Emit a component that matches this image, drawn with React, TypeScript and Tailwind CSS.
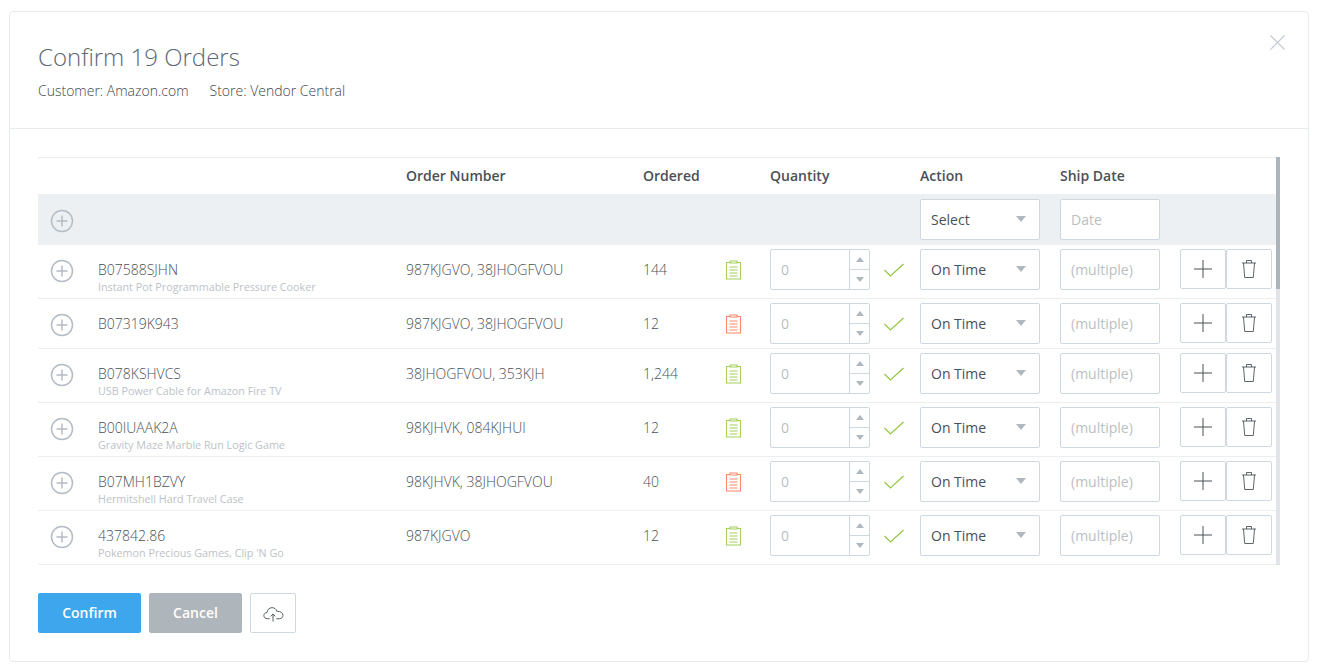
const orders = [
  { sku: "B07588SJHN", name: "Instant Pot Programmable Pressure Cooker", numbers: "987KJGVO, 38JHOGFVOU", ordered: "144", ok: true },
  { sku: "B07319K943", name: "", numbers: "987KJGVO, 38JHOGFVOU", ordered: "12", ok: false },
  { sku: "B078KSHVCS", name: "USB Power Cable for Amazon Fire TV", numbers: "38JHOGFVOU, 353KJH", ordered: "1,244", ok: true },
  { sku: "B00IUAAK2A", name: "Gravity Maze Marble Run Logic Game", numbers: "98KJHVK, 084KJHUI", ordered: "12", ok: true },
  { sku: "B07MH1BZVY", name: "Hermitshell Hard Travel Case", numbers: "98KJHVK, 38JHOGFVOU", ordered: "40", ok: false },
  { sku: "437842.86", name: "Pokemon Precious Games, Clip 'N Go", numbers: "987KJGVO", ordered: "12", ok: true },
]

const gridCols = "grid grid-cols-[60px_308px_237px_127px_150px_140px_120px_96px]"

function PlusCircle() {
  return (
    <svg className="mt-[2px]" width="24" height="24" viewBox="0 0 24 24" fill="none" stroke="#b4bcc4" strokeWidth="1.5">
      <circle cx="12" cy="12" r="10.5" />
      <path d="M12 6.5v11M6.5 12h11" />
    </svg>
  )
}

function Clipboard({ color }: { color: string }) {
  return (
    <svg width="17" height="20" viewBox="0 0 17 20" fill="none" stroke={color} strokeWidth="1.1">
      <path d="M5 2.5H1.5v16.5h14V2.5H12" />
      <path d="M5 3V1h7v2z" />
      <path d="M4.5 7h8M4.5 10h8M4.5 13h8M4.5 16h8" />
    </svg>
  )
}

function Caret() {
  return <span className="h-0 w-0 border-x-[5px] border-t-[6px] border-x-transparent border-t-[#b0b8bf]" />
}

function SelectBox({ label }: { label: string }) {
  return (
    <div className="flex h-[41px] w-[120px] items-center justify-between rounded-[2px] border border-[#cfd8e0] bg-white pl-[10px] pr-[13px] text-[14px] text-[#4a5057]">
      <span>{label}</span>
      <span className="mb-[2px] flex"><Caret /></span>
    </div>
  )
}

function TextBox({ placeholder }: { placeholder: string }) {
  return (
    <input
      readOnly
      placeholder={placeholder}
      className="h-[41px] w-[100px] rounded-[2px] border border-[#cfd8e0] bg-white px-[10px] text-[14px] outline-none placeholder:text-[#b9bfc5]"
    />
  )
}

function QuantityBox() {
  return (
    <div className="flex h-[41px] w-[100px] rounded-[2px] border border-[#cfd8e0] bg-white">
      <div className="flex flex-1 items-center pl-[10px] text-[14px] text-[#b9bfc5]">0</div>
      <div className="flex w-[20px] flex-col border-l border-[#cfd8e0]">
        <div className="flex flex-1 items-center justify-center border-b border-[#cfd8e0]">
          <span className="h-0 w-0 border-x-[4px] border-b-[5px] border-x-transparent border-b-[#b0b8bf]" />
        </div>
        <div className="flex flex-1 items-center justify-center">
          <span className="h-0 w-0 border-x-[4px] border-t-[5px] border-x-transparent border-t-[#b0b8bf]" />
        </div>
      </div>
    </div>
  )
}

function OrderRow({ order }: { order: (typeof orders)[number] }) {
  return (
    <div className={`${gridCols} border-b border-[#eceff2] pt-[4px] ${order.name ? "pb-[3px]" : "pb-[4px]"}`}>
      <div className="flex h-[41px] items-center pl-[12px]"><PlusCircle /></div>
      <div>
        <div className="flex h-[41px] items-center text-[14px] font-light text-[#4a5057]">{order.sku}</div>
        {order.name && <div className="mt-[-11px] text-[10.75px] leading-[16px] text-[#bdc2c7]">{order.name}</div>}
      </div>
      <div className="flex h-[41px] items-center text-[14px] font-light text-[#4a5057]">{order.numbers}</div>
      <div className="flex h-[41px] items-center justify-between pr-[28px] text-[14px] font-light text-[#4a5057]">
        <span>{order.ordered}</span>
        <Clipboard color={order.ok ? "#a5d05a" : "#fb8a6c"} />
      </div>
      <div className="flex h-[41px] items-center">
        <QuantityBox />
        <svg className="ml-[14px]" width="20" height="14" viewBox="0 0 20 14" fill="none" stroke="#93c644" strokeWidth="1.2">
          <path d="M.5 7l6 6L19.5 1" />
        </svg>
      </div>
      <SelectBox label="On Time" />
      <TextBox placeholder="(multiple)" />
      <div className="flex">
        <button className="flex h-[40px] w-[46px] items-center justify-center rounded-[2px] border border-[#cfd8e0] bg-white">
          <svg width="18" height="18" viewBox="0 0 18 18" stroke="#4d5359" strokeWidth="1">
            <path d="M9 0v18M0 9h18" />
          </svg>
        </button>
        <button className="flex h-[40px] w-[46px] items-center justify-center rounded-[2px] border border-[#cfd8e0] bg-white">
          <svg width="16" height="20" viewBox="0 0 16 20" fill="none" stroke="#4d5359" strokeWidth="0.9">
            <path d="M1 4h14M5.5 4V1.5h5V4M2.5 4l1.2 14.5h8.6L13.5 4" />
          </svg>
        </button>
      </div>
    </div>
  )
}

export default function App() {
  return (
    <div className="h-[672px] bg-white pl-[9px] pr-[11px] pt-[11px] font-['Open_Sans',sans-serif]">
      <div className="relative h-[651px] rounded-[4px] border border-[#e8ebee]">
        <div className="h-[117px] border-b border-[#e8ebee] pl-[28px] pt-[27px]">
          <h1 className="text-[24px] font-light leading-[36px] text-[#5c6873]">Confirm 19 Orders</h1>
          <div className="mt-[6px] flex gap-[21px] text-[14px] font-light leading-[20px] text-[#3f454b]">
            <span>Customer: Amazon.com</span>
            <span>Store: Vendor Central</span>
          </div>
        </div>
        <button className="absolute right-[23px] top-[23px]">
          <svg className="block" width="15" height="15" viewBox="0 0 15 15" stroke="#c3cad1" strokeWidth="1.1">
            <path d="M.5.5l14 14M14.5.5l-14 14" />
          </svg>
        </button>

        <div className="ml-[28px] mt-[28px] flex h-[408px] w-[1242px]">
          <div className="w-[1238px] overflow-hidden">
            <div className={`${gridCols} h-[37px] items-center border-t border-[#eceff2] pb-[2px] text-[14px] font-semibold text-[#4a5057]`}>
              <div />
              <div />
              <div>Order Number</div>
              <div>Ordered</div>
              <div>Quantity</div>
              <div>Action</div>
              <div>Ship Date</div>
              <div />
            </div>
            <div className={`${gridCols} h-[51px] bg-[#edf0f3] pt-[5px]`}>
              <div className="flex h-[41px] items-center pl-[12px]"><PlusCircle /></div>
              <div />
              <div />
              <div />
              <div />
              <SelectBox label="Select" />
              <TextBox placeholder="Date" />
              <div />
            </div>
            {orders.map((order) => (
              <OrderRow key={order.sku} order={order} />
            ))}
          </div>
          <div className="w-[4px] bg-[#e1e4e8]">
            <div className="h-[132px] bg-[#adb5bc]" />
          </div>
        </div>

        <div className="ml-[28px] mt-[28px] flex gap-[8px]">
          <button className="h-[40px] w-[103px] rounded-[2px] bg-[#3ea6ed] pb-[2px] text-[14px] font-semibold text-white">Confirm</button>
          <button className="h-[40px] w-[93px] rounded-[2px] bg-[#aeb5bb] pb-[2px] text-[14px] font-semibold text-white">Cancel</button>
          <button className="flex h-[40px] w-[46px] items-center justify-center rounded-[2px] border border-[#cfd8e0] bg-white">
            <svg className="mt-[2px]" width="21" height="15" viewBox="0 0 22 16" fill="none" stroke="#4d5359" strokeWidth="1">
              <path d="M7 12.5H4.5C2.3 12.5.7 11 .7 9.2S2.2 6 4 6c.3-3 2.6-5.3 5.4-5.3 2.6 0 4.6 1.6 5.2 4 .3-.1.6-.1.9-.1 2.8 0 5.6 1.7 5.6 4.4 0 2.1-1.7 3.5-3.9 3.5H14" />
              <path d="M10.5 15.5V7.5M8 10l2.5-2.5L13 10" />
            </svg>
          </button>
        </div>
      </div>
    </div>
  )
}
